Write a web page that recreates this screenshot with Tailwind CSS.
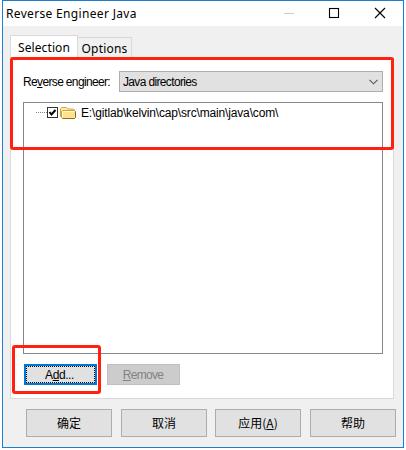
<!DOCTYPE html>
<html lang="zh">
<head>
<meta charset="utf-8">
<title>Reverse Engineer Java</title>
<script src="https://cdn.jsdelivr.net/npm/@tailwindcss/browser@4"></script>
</head>
<body class="bg-white w-[406px] h-[450px] overflow-hidden text-black font-['Liberation_Sans','Noto_Sans_CJK_SC',sans-serif] text-[12px] leading-none">
<div class="relative ml-[2px] w-[402px] h-[448px] border border-[#1a7fd0] bg-[#f0f0f0] flex flex-col">
  <header class="h-[25px] shrink-0 bg-white flex items-center justify-between pl-[3px]">
    <h1 class="font-['Noto_Sans','Noto_Sans_CJK_SC',sans-serif] text-[12px] tracking-[0.33px] whitespace-nowrap">Reverse Engineer Java</h1>
    <svg class="w-[120px] h-[25px] shrink-0" viewBox="0 0 120 25" fill="none">
      <path d="M1 12.5h10" stroke="#ccc"/>
      <rect x="46.5" y="7.5" width="9" height="9" stroke="#000" stroke-width="1.1"/>
      <path d="M92 7l10 10M102 7l-10 10" stroke="#000" stroke-width="1.1"/>
    </svg>
  </header>
  <nav class="h-[31px] shrink-0 pl-[7px] flex items-end font-['Noto_Sans',sans-serif] text-[12px]">
    <div class="w-[68px] h-[22px] bg-white border border-b-0 border-[#d9d9d9] flex items-center justify-center pt-[2px] tracking-[0.1px]">Selection</div>
    <div class="w-[54px] h-[20px] border border-l-0 border-b-0 border-[#d9d9d9] flex items-center justify-center pt-[3px] tracking-[0.2px]">Options</div>
  </nav>
  <main class="ml-[7px] w-[384px] h-[342px] shrink-0 bg-white border border-[#d9d9d9] pl-[12px] pt-[13px]">
    <div class="flex items-center h-[21px]">
      <label class="w-[96px] whitespace-nowrap tracking-[-0.65px]">Re<span class="underline underline-offset-1">v</span>erse engineer:</label>
      <div class="w-[264px] h-[21px] bg-[#e1e1e1] border border-[#adadad] flex items-center justify-between pl-[3px] pr-[4px]">
        <span class="tracking-[-0.65px] pt-px">Java directories</span>
        <svg class="w-[9px] h-[6px]" viewBox="0 0 9 6" fill="none"><path d="M.5 .8l4 4 4-4" stroke="#555" stroke-width="1.1"/></svg>
      </div>
    </div>
    <div class="mt-[10px] w-[360px] h-[252px] border border-[#828790] pl-[12px] pt-[3px]">
      <div class="flex items-center h-[13px]">
        <svg class="w-[41px] h-[14px] shrink-0" viewBox="0 0 41 14" fill="none">
          <path d="M0 6.5h11" stroke="#808080" stroke-dasharray="1 1"/>
          <rect x="11.5" y="1.5" width="10" height="10" fill="#fff" stroke="#333"/>
          <path d="M13.5 6l2 2.500 4-4.500" stroke="#000" stroke-width="2"/>
          <path d="M24.500 10.500v-8l1-1h5l1.500 1.500h5.500l1 1v7z" fill="#fdf0a8" stroke="#d0a545"/>
          <path d="M26.500 4.500h12l1 1v6l-1 1h-12l-1-1v-6z" fill="#fde294" stroke="#d0a040"/>
          <path d="M27 5.500h11.500M26.500 6v5" stroke="#fffad2"/>
          <path d="M26.500 12.500h12l1-1v-6" stroke="#8d6a22"/>
        </svg>
        <span class="ml-[4px] whitespace-nowrap tracking-[-0.16px]">E:\gitlab\kelvin\cap\src\main\java\com\</span>
      </div>
    </div>
    <div class="mt-[10px] pl-px flex gap-[10px]">
      <button class="w-[73px] h-[21px] bg-[#e1e1e1] border-2 border-[#0078d7]"><span class="w-full h-full border border-dotted border-black flex items-center justify-center tracking-[-0.4px] pr-[2px]">A<span class="underline underline-offset-1">d</span>d...</span></button>
      <button class="w-[73px] h-[21px] bg-[#ccc] border border-[#bfbfbf] text-[#838383] flex items-center justify-center tracking-[-0.7px]"><span class="pr-px"><span class="underline underline-offset-1">R</span>emove</span></button>
    </div>
  </main>
  <footer class="mt-[10px] pl-[23px] flex gap-[9px] font-['Noto_Sans_CJK_SC',sans-serif] text-[12px]">
    <button class="w-[86px] h-[28px] bg-[#e1e1e1] border border-[#adadad]">确定</button>
    <button class="w-[86px] h-[28px] bg-[#e1e1e1] border border-[#adadad]">取消</button>
    <button class="-ml-px w-[86px] h-[28px] bg-[#e1e1e1] border border-[#adadad]">应用(<span class="underline underline-offset-1">A</span>)</button>
    <button class="w-[86px] h-[28px] bg-[#e1e1e1] border border-[#adadad]">帮助</button>
  </footer>
  <div class="absolute left-[7px] top-[56px] w-[384px] h-[93px] border-[3px] border-[#ff2010] rounded-[3px]"></div>
  <div class="absolute left-[9px] top-[344px] w-[89px] h-[49px] border-[3px] border-[#ff2010] rounded-[3px]"></div>
</div>
</body>
</html>
